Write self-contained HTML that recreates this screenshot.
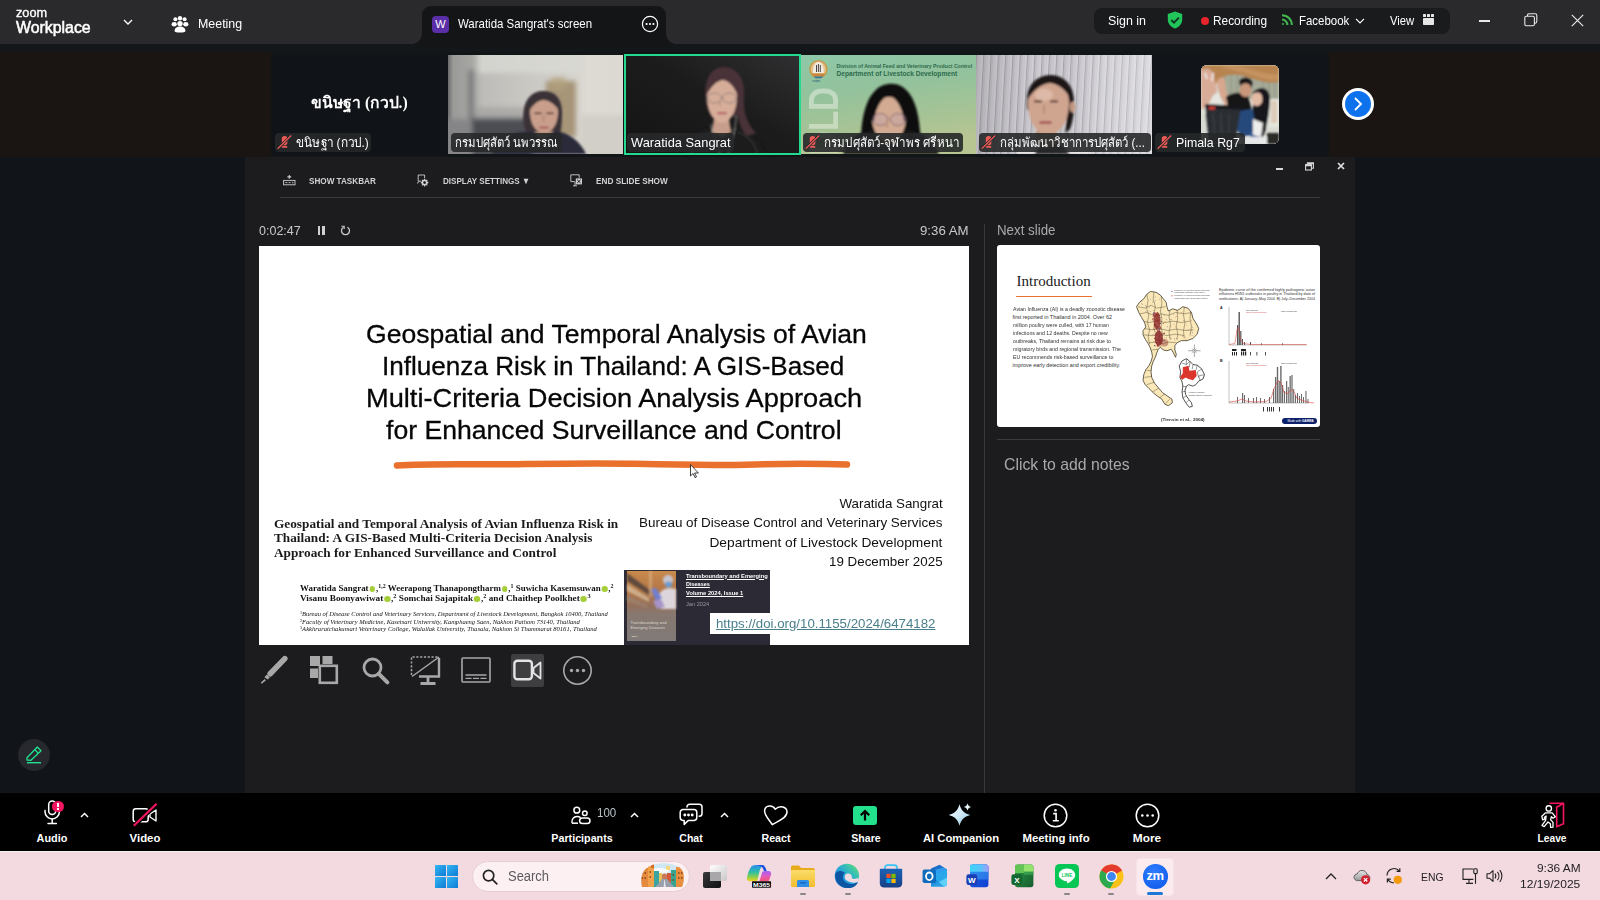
<!DOCTYPE html>
<html lang="en">
<head>
<meta charset="utf-8">
<title>Zoom Workplace</title>
<style>
*{box-sizing:border-box;margin:0;padding:0}
html,body{width:1600px;height:900px;overflow:hidden;background:#1a1512}
body{position:relative;font-family:"Liberation Sans","DejaVu Sans",sans-serif;color:#fff}
.abs{position:absolute}
.t{position:absolute;white-space:nowrap;line-height:1;transform-origin:0 0}
svg{position:absolute;overflow:visible}
/* ---------- title bar ---------- */
#titlebar{left:0;top:0;width:1600px;height:44px;background:#2a2a2c}
#strip0{left:0;top:44px;width:1600px;height:8px;background:#14171a}
#tab{left:422px;top:6px;width:244px;height:40px;background:#131517;border-radius:9px 9px 0 0}
#pill{left:1094px;top:8px;width:356px;height:26px;background:#1a1b1d;border-radius:8px}
.tb{font-size:13px;color:#fff;top:14px}
/* ---------- video strip ---------- */
#vstrip{left:271px;top:52px;width:1058px;height:105px;background:#121518}
.tile{position:absolute;top:55px;width:175px;height:99px;overflow:hidden}
.tile svg{left:0;top:0}
.nm{position:absolute;top:133px;height:19px;background:rgba(38,40,41,.9);border-radius:4px;font-size:13px;line-height:19px;white-space:nowrap;color:#fff;overflow:hidden}
.nm svg{left:1.500px;top:0}
/* ---------- main share area ---------- */
#leftgut{left:0;top:157px;width:245px;height:636px;background:#111519}
#rightgut{left:1355px;top:157px;width:245px;height:636px;background:#111519}
#main{left:245px;top:157px;width:1110px;height:636px;background:#1c1b1e}
.ppt{font-size:9px;font-weight:bold;color:#d2d2d2;top:176.5px}
.hr{position:absolute;height:1px;background:#3b3a3d}
#slide{left:259px;top:246px;width:710px;height:399px;background:#fff;overflow:hidden;color:#111}
#slide .t{color:#111}
#next{left:997px;top:245px;width:323px;height:182px;background:#fff;border-radius:3px;overflow:hidden;color:#222}
/* ---------- zoom toolbar ---------- */
#ztool{left:0;top:793px;width:1600px;height:58px;background:#000}
.zl{position:absolute;top:832.700px;font-size:11.5px;font-weight:bold;color:#fff;white-space:nowrap;line-height:1;transform:translateX(-50%)}
/* ---------- windows taskbar ---------- */
#wtask{left:0;top:851px;width:1600px;height:49px;background:#f3d9e0;border-top:1px solid #f6f0f2}
.wt{color:#1d1d1f;font-size:12px}
.au{font-size:8.700px;font-weight:bold;font-family:'Liberation Serif','DejaVu Serif',serif;color:#1b1b1b}
.au i{display:inline-block;width:5.500px;height:5.500px;border-radius:50%;background:#a6ce39;margin:0 .8px 0 1px;vertical-align:-0.300px}
.au sup{font-size:5.800px;vertical-align:3.200px;line-height:0}
.af{font-size:6.300px;font-style:italic;font-family:'Liberation Serif','DejaVu Serif',serif;color:#222}
.af sup{font-size:4px;font-style:normal;vertical-align:2.200px;line-height:0}
.nb{font-size:5.400px;color:#333;left:15.500px}
</style>
</head>
<body>
<!-- ================= TITLE BAR ================= -->
<div id="titlebar" class="abs"></div>
<div id="strip0" class="abs"></div>
<div id="tab" class="abs"></div>
<div id="pill" class="abs"></div>
<div id="tabcl" class="abs" style="left:412px;top:34px;width:10px;height:10px;background:radial-gradient(circle at 0 0,rgba(19,21,23,0) 9.500px,#131517 10px)"></div>
<div id="tabcr" class="abs" style="left:666px;top:34px;width:10px;height:10px;background:radial-gradient(circle at 100% 0,rgba(19,21,23,0) 9.500px,#131517 10px)"></div>

<div class="t" id="zlogo" style="left:16px;top:6px;font-size:13.500px;font-weight:normal;-webkit-text-stroke:.35px #fff;transform-origin:0 0;transform:scaleX(.94)">zoom</div>
<div class="t" id="zwork" style="left:16px;top:19px;font-size:16.5px;font-weight:normal;-webkit-text-stroke:.55px #fff;transform-origin:0 0;transform:scaleX(.962)">Workplace</div>
<svg style="left:123px;top:19px" width="10" height="7" viewBox="0 0 10 7"><path d="M1 1l4 4 4-4" fill="none" stroke="#fff" stroke-width="1.3"/></svg>
<!-- meeting people icon -->
<svg style="left:171px;top:15px" width="18" height="18" viewBox="0 0 18 18" fill="#fff">
<circle cx="4.4" cy="4.2" r="2"/><circle cx="9" cy="3.3" r="2.2"/><circle cx="13.6" cy="4.2" r="2"/>
<ellipse cx="3.2" cy="9.2" rx="2.6" ry="2.2"/><ellipse cx="14.8" cy="9.2" rx="2.6" ry="2.2"/>
<circle cx="9" cy="8.6" r="2.7"/><path d="M3.6 16.2c0-3 2.2-4.6 5.4-4.6s5.400 1.600 5.400 4.600c0 .8-2.400 1.300-5.400 1.300s-5.400-.5-5.400-1.300z"/>
</svg>
<div class="t tb" id="tmeet" style="left:198px;top:17px;transform:scaleX(.955)">Meeting</div>

<!-- tab -->
<div class="abs" style="left:432px;top:16px;width:17px;height:17px;border-radius:4px;background:#5a2ea6"></div>
<div class="t" style="left:432px;top:19px;width:17px;text-align:center;font-size:11px">W</div>
<div class="t tb" id="ttab" style="left:458px;top:17px;transform:scaleX(.88)">Waratida Sangrat's screen</div>
<svg style="left:641px;top:15px" width="18" height="18" viewBox="0 0 18 18"><circle cx="9" cy="9" r="7.6" fill="none" stroke="#fff" stroke-width="1.2"/><circle cx="5.6" cy="9" r="1.1" fill="#fff"/><circle cx="9" cy="9" r="1.1" fill="#fff"/><circle cx="12.4" cy="9" r="1.1" fill="#fff"/></svg>

<!-- right pill -->
<div class="t tb" id="tsign" style="left:1108px;transform:scaleX(.957)">Sign in</div>
<svg style="left:1166px;top:11px" width="18" height="18" viewBox="0 0 18 18"><path d="M9 .6l7.200 2.500v5.300c0 4.200-3 7.600-7.200 9-4.200-1.400-7.200-4.800-7.200-9V3.100z" fill="#22c55a"/><path d="M5.300 9l2.700 2.700 4.900-5" fill="none" stroke="#12331f" stroke-width="1.900"/></svg>
<div class="abs" style="left:1201px;top:17px;width:8px;height:8px;border-radius:50%;background:#e8252b"></div>
<div class="t tb" id="trec" style="left:1213px;transform:scaleX(.912)">Recording</div>
<svg style="left:1281px;top:14px" width="12" height="12" viewBox="0 0 12 12" fill="none" stroke="#3fb950" stroke-width="2"><path d="M1 1.200c5.600 0 9.800 4.200 9.800 9.800"/><path d="M1 5.600c3 0 5.400 2.400 5.400 5.400"/><circle cx="2" cy="10" r="1" fill="#3fb950" stroke="none"/></svg>
<div class="t tb" id="tfb" style="left:1299px;transform:scaleX(.88)">Facebook</div>
<svg style="left:1355px;top:18px" width="10" height="6" viewBox="0 0 10 6"><path d="M1 .8l4 4 4-4" fill="none" stroke="#fff" stroke-width="1.200"/></svg>
<div class="t tb" id="tview" style="left:1390px;transform:scaleX(.868)">View</div>
<svg style="left:1423px;top:14px" width="11" height="11" viewBox="0 0 11 11" fill="#e6e6e6"><rect x="0" y="0" width="3" height="3" rx=".5"/><rect x="4" y="0" width="3" height="3" rx=".5"/><rect x="8" y="0" width="3" height="3" rx=".5"/><rect x="0" y="4" width="11" height="7" rx=".8"/></svg>
<!-- window controls -->
<div class="abs" style="left:1479px;top:20px;width:11px;height:1.5px;background:#e8e8e8"></div>
<svg style="left:1524px;top:13px" width="14" height="14" viewBox="0 0 14 14" fill="none" stroke="#e8e8e8" stroke-width="1.1"><rect x=".8" y="3.200" width="9.600" height="9.600" rx="1.600"/><path d="M3.400 3V2.400c0-.9.700-1.600 1.600-1.600h6.200c.9 0 1.600.7 1.600 1.600v6.200c0 .9-.7 1.600-1.600 1.600h-.6"/></svg>
<svg style="left:1571px;top:14px" width="13" height="13" viewBox="0 0 13 13"><path d="M.8.800l11.400 11.400M12.200.800L.8 12.200" stroke="#e8e8e8" stroke-width="1.200" fill="none"/></svg>
<!-- ================= VIDEO STRIP ================= -->
<div id="vstrip" class="abs"></div>
<svg width="0" height="0" style="left:0;top:0"><defs>
<filter id="b0" x="-10%" y="-10%" width="120%" height="120%"><feGaussianBlur stdDeviation=".35"/></filter>
<filter id="b1" x="-20%" y="-20%" width="140%" height="140%"><feGaussianBlur stdDeviation="1.1"/></filter>
<filter id="b2" x="-20%" y="-20%" width="140%" height="140%"><feGaussianBlur stdDeviation="2.400"/></filter>
<filter id="b5" x="-30%" y="-30%" width="160%" height="160%"><feGaussianBlur stdDeviation="5"/></filter>
<g id="mute"><rect x="4.800" y="3" width="5.600" height="9.200" rx="2.800" fill="#ee5b57"/><path d="M4.900 13.300c1.600-.7 3.800-.7 5.400 0v1.500H4.900z" fill="#ee5b57"/><path d="M.7 15.800L14.200 2.500" stroke="#26282a" stroke-width="2.600" fill="none"/><path d="M.7 15.800L14.200 2.500" stroke="#ee5b57" stroke-width="1.200" fill="none"/></g>
</defs></svg>

<!-- tile 1 : name only -->
<div class="tile" style="left:272px;background:#101317"></div>
<div class="t" id="v1big" style="left:311px;top:95px;font-size:16px;font-weight:bold;font-family:'Liberation Serif','DejaVu Serif',serif;transform:scaleX(.98)">ขนิษฐา (กวป.)</div>
<div class="nm" style="left:275px;width:96px"><svg width="15" height="15" viewBox="0 0 15 15"><use href="#mute"/></svg><span class="t" id="v1nm" style="left:21px;top:3px;transform:scaleX(.91)">ขนิษฐา (กวป.)</span></div>

<!-- tile 2 : woman, pale room -->
<div class="tile" style="left:448px;background:#cfcdc8">
<svg width="175" height="99" viewBox="0 0 175 99">
<defs><linearGradient id="g2" x1="0" x2="1" y1="0" y2="0"><stop offset="0" stop-color="#6c6d6e"/><stop offset=".03" stop-color="#9a9a98"/><stop offset=".13" stop-color="#a6a6a3"/><stop offset=".2" stop-color="#bdbcb8"/><stop offset=".45" stop-color="#c9c8c3"/><stop offset=".7" stop-color="#d3d1cb"/><stop offset=".8" stop-color="#dddbd4"/><stop offset="1" stop-color="#dbd9d2"/></linearGradient></defs>
<rect width="175" height="99" fill="url(#g2)"/>
<g filter="url(#b2)">
<rect x="30" y="-4" width="100" height="22" fill="#dad9d4" opacity=".8"/>
<rect x="20" y="15" width="6" height="60" fill="#77777a" opacity=".85"/>
<rect x="98" y="26" width="30" height="56" fill="#9c8764" opacity=".8"/>
<rect x="103" y="22" width="14" height="12" fill="#b7a47e" opacity=".7"/>
<rect x="-6" y="64" width="32" height="42" fill="#858587"/>
<rect x="24" y="62" width="60" height="44" fill="#4c4d52"/>
<rect x="26" y="52" width="50" height="12" fill="#a2a19f" opacity=".7"/>
<rect x="132" y="60" width="50" height="44" fill="#d2cfc8"/>
</g>
<g filter="url(#b1)">
<path d="M76 70c-3-18 3-33 18-34 13-1 21 8 20 24 0 9-1 17-3 24l-28 1c-3-4-6-9-7-15z" fill="#3b3338"/>
<path d="M44 99c2-11 13-19 30-22l34-1c13 2 24 10 30 23z" fill="#2a2c3a"/>
<path d="M86 77l9 9 11-10z" fill="#b48a77"/>
<path d="M82 57c0-10 6-16 14-16s14 6 14 16c0 12-6 21-14 21s-14-9-14-21z" fill="#c99f8c"/>
<path d="M81 56c1-11 7-17 15-17s13 5 14 15c-5-6-10-9-15-9-6 1-10 5-14 11z" fill="#3b3338"/>
<rect x="91" y="71.500" width="10" height="2.200" rx="1.100" fill="#a9605d"/>
<rect x="86.500" y="57.500" width="7" height="1.600" fill="#50342f"/><rect x="98.500" y="57.500" width="7" height="1.600" fill="#50342f"/>
<path d="M95.500 60v7" stroke="#ad816e" stroke-width="1.400"/>
</g>
</svg></div>
<div class="nm" style="left:451px;width:111px"><span class="t" id="v2nm" style="left:4px;top:3px;transform:scaleX(.875)">กรมปศุสัตว์ นพวรรณ</span></div>

<!-- tile 3 : active speaker -->
<div class="tile" style="left:624px;width:177px;top:54px;height:101px;background:#131313">
<svg width="177" height="101" viewBox="0 0 177 101">
<defs><linearGradient id="g3" x1="0" y1="1" x2="1" y2="0"><stop offset="0" stop-color="#141414"/><stop offset=".55" stop-color="#1c1c1c"/><stop offset="1" stop-color="#303032"/></linearGradient></defs>
<rect width="177" height="101" fill="url(#g3)"/>
<g filter="url(#b1)">
<path d="M60 101c2-16 10-24 26-27l28 1c14 3 22 10 27 26z" fill="#1a1a1b"/>
<path d="M66 101c2-12 8-19 22-23M134 101c-3-12-9-19-20-23" stroke="#303032" stroke-width="1.600" fill="none"/>
<path d="M82 50c-3-22 3-36 17-37 15 0 22 12 21 30 0 8 0 13 2 19 2 7 6 13 10 17l-9 3c-5-5-8-12-9-20l-26 2c-3-4-5-8-6-14z" fill="#4a3137"/>
<path d="M90 64h15l2 14-9 5-10-5z" fill="#c79e8b"/>
<path d="M83 42c0-12 6-19 15-19s15 7 15 19c0 15-7 27-15 27s-15-12-15-27z" fill="#d6ad99"/>
<path d="M82 42c1-16 8-22 16-22 9 0 15 6 15 20-4-9-9-14-15-14-7 2-11 7-16 16z" fill="#4a3137"/>
<ellipse cx="90.500" cy="44" rx="7" ry="5" fill="none" stroke="#8a7c7c" stroke-width=".9"/><ellipse cx="105.500" cy="44" rx="7" ry="5" fill="none" stroke="#8a7c7c" stroke-width=".9"/><path d="M97.500 43.500h1" stroke="#8a7c7c" stroke-width=".8"/>
<rect x="93" y="58" width="10" height="2.200" rx="1.100" fill="#b5606a"/>
<path d="M96 46v6" stroke="#b98f7c" stroke-width="1.400"/>
<path d="M87 70c2 10 6 18 9 28M112 62c0 12-4 24-8 36" stroke="#bdbdbd" stroke-width=".7" fill="none"/>
</g>
</svg>
<div class="abs" style="left:0;top:0;width:177px;height:101px;border:2px solid #24d990"></div>
</div>
<div class="nm" style="left:627px;width:107px;font-size:13.500px"><span class="t" id="v3nm" style="left:4px;top:3px;transform:scaleX(.952)">Waratida Sangrat</span></div>

<!-- tile 4 : green DLD backdrop -->
<div class="tile" style="left:801px;width:175px;background:#95c39b">
<svg width="175" height="99" viewBox="0 0 175 99">
<defs><linearGradient id="g4" x1="0" x2=".25" y1="0" y2="1"><stop offset="0" stop-color="#8ec8a8"/><stop offset=".4" stop-color="#93c29c"/><stop offset=".75" stop-color="#a6c395"/><stop offset="1" stop-color="#b7c592"/></linearGradient></defs>
<rect width="175" height="99" fill="url(#g4)"/>
<text transform="translate(36.600 100) rotate(-90) scale(.77 1)" font-family="Liberation Sans,sans-serif" font-weight="bold" font-size="43" fill="#e6eee0" opacity=".55">DLD</text>
<circle cx="17.400" cy="14.200" r="9.200" fill="#c99a4c"/><circle cx="17.400" cy="14.200" r="7.600" fill="#e2c48e"/><path d="M12 18c0-7 2-11 5.400-11s5.400 4 5.400 11z" fill="#f3ece0"/><path d="M15.500 17V10M17.400 17V9M19.300 17V10" stroke="#333" stroke-width=".9"/><path d="M11 18.500h13l-1.600 3h-9.800z" fill="#c8873a"/><path d="M12.600 21.500h9.600l-2 1.800h-5.600z" fill="#2c78a8"/>
<text x="11" y="27.400" font-family="Liberation Sans,sans-serif" font-size="2.200" fill="#2f6e78">กรมปศุสัตว์</text>
<text x="35.600" y="13" font-family="Liberation Sans,sans-serif" font-weight="bold" font-size="5.300" fill="#2d6b4c" textLength="135.600" lengthAdjust="spacingAndGlyphs">Division of Animal Feed and Veterinary Product Control</text>
<text x="35.600" y="20.600" font-family="Liberation Sans,sans-serif" font-weight="bold" font-size="6.700" fill="#2d6b4c" textLength="120.600" lengthAdjust="spacingAndGlyphs">Department of Livestock Development</text>
<g filter="url(#b1)">
<path d="M60 92c-1-30 6-60 27-63 9-1 15 2 21 9 9 12 11 30 12 54l-4 7H64z" fill="#0e0e10"/>
<path d="M42 99c3-12 14-21 28-24h38c14 2 24 11 30 24z" fill="#141416"/>
<path d="M71 62c0-12 7-20 17-20s17 8 17 20c0 14-8 26-17 26s-17-12-17-26z" fill="#d3aa92"/>
<path d="M69 66c-1-18 5-30 17-34l2 8c-8 4-13 12-15 26zM107 66c1-18-5-30-17-34l-2 8c8 4 13 12 15 26z" fill="#0e0e10"/>
<ellipse cx="79.500" cy="64.500" rx="7.500" ry="6" fill="#b9a0c0" fill-opacity=".25" stroke="#7d6470" stroke-width=".9"/><ellipse cx="97" cy="64.500" rx="7.500" ry="6" fill="#b9a0c0" fill-opacity=".25" stroke="#7d6470" stroke-width=".9"/>
<path d="M86 64v9" stroke="#b98f78" stroke-width="1.600"/>
<path d="M76 84l12 10 12-10v12H76z" fill="#141416"/>
</g>
</svg></div>
<div class="nm" style="left:803px;width:160px"><svg width="15" height="15" viewBox="0 0 15 15"><use href="#mute"/></svg><span class="t" id="v4nm" style="left:21px;top:3px;transform:scaleX(.894)">กรมปศุสัตว์-จุฬาพร ศรีหนา</span></div>

<!-- tile 5 : woman, blinds -->
<div class="tile" style="left:976px;width:176px;background:#cfccd2">
<svg width="176" height="99" viewBox="0 0 176 99">
<defs><pattern id="bl" width="7.300" height="99" patternUnits="userSpaceOnUse" patternTransform="skewX(-3)"><rect width="7.300" height="99" fill="#cfcdd3"/><rect x="0" width="1.100" height="99" fill="#a9a7ae"/><rect x="1.100" width="1.600" height="99" fill="#c3c1c8"/><rect x="5.500" width="1.800" height="99" fill="#d6d4da"/></pattern>
<linearGradient id="g5" x1="0" x2="1" y1="0" y2="0"><stop offset="0" stop-color="#000" stop-opacity=".12"/><stop offset=".35" stop-color="#000" stop-opacity=".02"/><stop offset=".7" stop-color="#fff" stop-opacity=".12"/><stop offset="1" stop-color="#fff" stop-opacity=".3"/></linearGradient></defs>
<rect x="-6" width="190" height="99" fill="url(#bl)"/><rect width="176" height="99" fill="url(#g5)"/>
<g filter="url(#b1)">
<path d="M40 99c3-9 12-14 24-16h24c12 1 22 6 28 16z" fill="#ebe7e6"/>
<path d="M58 99l10-14h14l12 14z" fill="#2a2729"/>
<path d="M51 52c-1-20 9-32 24-32 15 1 24 12 23 30 0 8-1 16-4 24l-5 4c2-10 2-20 0-28l-36 6c-1-1-2-2-2-4z" fill="#1b1719"/>
<ellipse cx="96.500" cy="52" rx="3" ry="5.500" fill="#c39882"/>
<path d="M60 76h20l3 12-13 5-12-5z" fill="#c3947e"/>
<path d="M52 48c0-15 8-24 20-24s21 9 21 24c0 18-9 32-21 32S52 66 52 48z" fill="#d0a590"/>
<ellipse cx="68" cy="40" rx="9" ry="6" fill="#e3c3b2" opacity=".7"/>
<path d="M51 46c0-16 9-25 22-25 12 0 21 8 21 22-5-9-12-14-20-15-9 1-17 7-23 18z" fill="#1b1719"/>
<rect x="58" y="45.500" width="8" height="1.800" fill="#3d2824"/><rect x="74" y="45.500" width="8" height="1.800" fill="#3d2824"/>
<path d="M68 50v9" stroke="#b58a76" stroke-width="1.800"/>
<rect x="63" y="66" width="13" height="3" rx="1.500" fill="#a85f5c"/>
</g>
</svg></div>
<div class="nm" style="left:979px;width:172px"><svg width="15" height="15" viewBox="0 0 15 15"><use href="#mute"/></svg><span class="t" id="v5nm" style="left:21px;top:3px;transform:scaleX(.879)">กลุ่มพัฒนาวิชาการปศุสัตว์ (...</span></div>

<!-- tile 6 : avatar -->
<div class="tile" style="left:1152px;width:176px;background:#111418">
<div class="abs" style="left:49px;top:10px;width:78px;height:79px;border-radius:6px;overflow:hidden;background:#d9d8d0">
<svg width="78" height="79" viewBox="0 0 78 79">
<rect width="78" height="79" fill="#d9dbd2"/>
<g filter="url(#b1)">
<path d="M18 8h60v26H18z" fill="#a6ab99"/>
<path d="M24 10v22M30 10v22M36 10v22M62 14v18M68 14v18M74 14v18" stroke="#8c917f" stroke-width="1"/>
<rect x="60" y="34" width="18" height="28" fill="#e4e6dc"/><rect x="70" y="36" width="6" height="22" fill="#d8b8a0" opacity=".6"/>
<rect x="0" y="28" width="22" height="20" fill="#e3e5de"/>
<path d="M0 0h78v17c-8 2-16 0-26-3-10-4-22-6-30-2-6 3-8 8-10 16-2 8-6 14-12 16z" fill="#b78450"/>
<path d="M20 2c10-3 24 0 36 4 8 3 16 4 22 3v6c-8 1-16-1-24-4-12-4-24-6-34-9z" fill="#c99a68" opacity=".7"/>
<path d="M0 6c4-4 9-3 12 2l3 12c2 6 0 10-3 10l-4 8-8 8z" fill="#d9ac98"/>
<path d="M4 8l2 6M12 8l-1 8" stroke="#f1e4e0" stroke-width="2"/>
<path d="M16 16c2-4 6-4 8-2l1 10c1 6 3 10 6 12l-4 6c-6-4-10-14-11-26z" fill="#d7a78e"/>
<path d="M25 32c4-4 14-6 22-2l4 16-22 6z" fill="#131316"/>
<path d="M38 16c2-5 12-5 14 2l-2 6H40z" fill="#17151a"/>
<ellipse cx="44.500" cy="25" rx="6" ry="7" fill="#c9987c"/>
<path d="M38 19c3-5 10-5 13-1-4 0-8 0-13 1z" fill="#17151a"/>
<path d="M54 26c6-6 16-3 15 10-1 14-3 28-8 38l-9-4c3-8 2-18 0-26z" fill="#17141b"/>
<ellipse cx="56" cy="34" rx="5.500" ry="7" fill="#e4bba5"/>
<path d="M51 29c2-5 8-6 12-2-4 0-8 0-12 2z" fill="#17141b"/>
<path d="M52 41c4 2 10 4 14 12l-4 12-12-6z" fill="#17151a"/>
<path d="M37 46l14-2c3 6 3 16 0 26l-10 2-6-8z" fill="#27487b"/>
<path d="M50 66l10 2-2 9H48z" fill="#2f5a94"/>
<path d="M52 54l10 4-2 14-8-2z" fill="#eeeeec"/>
<path d="M4 40l36 2-6 37H8z" fill="#2b2f33"/><path d="M4 39l37 2v3.500L5 43z" fill="#15171a"/><rect x="8" y="41.500" width="6" height="3" fill="#d63a34"/>
<path d="M12 48l2 28M20 48l1 30M28 49v28" stroke="#3d4247" stroke-width="1.200"/>
<rect x="44" y="72" width="24" height="7" fill="#e6e8ea"/><rect x="66" y="68" width="12" height="11" fill="#2c2a28"/>
</g>
</svg></div>
</div>
<div class="nm" style="left:1155px;width:90px;font-size:13.500px"><svg width="15" height="15" viewBox="0 0 15 15"><use href="#mute"/></svg><span class="t" id="v6nm" style="left:21px;top:3px;transform:scaleX(.914)">Pimala Rg7</span></div>

<!-- next page button -->
<div class="abs" style="left:1342px;top:88px;width:32px;height:32px;border-radius:50%;background:#fff"></div>
<div class="abs" style="left:1345px;top:91px;width:26px;height:26px;border-radius:50%;background:#0e72ed"></div>
<svg style="left:1352px;top:96px" width="12" height="16" viewBox="0 0 12 16"><path d="M3 2l6 6-6 6" fill="none" stroke="#fff" stroke-width="1.800"/></svg>
<!-- ================= MAIN ================= -->
<div id="leftgut" class="abs"></div>
<div id="rightgut" class="abs"></div>
<div id="main" class="abs"></div>

<!-- presenter-view window controls -->
<div class="abs" style="left:1276px;top:168px;width:7px;height:2px;background:#d8d8d8"></div>
<svg style="left:1305px;top:162px" width="9" height="9" viewBox="0 0 9 9" fill="none" stroke="#d8d8d8" stroke-width="1.100"><rect x=".6" y="2.600" width="5.800" height="5.400"/><path d="M2.400 2.400V.8h6v5.400H6.600"/><path d="M.6 3.600h5.800M2.400 1.600h6" stroke-width="1.400"/></svg>
<svg style="left:1337px;top:162px" width="8" height="8" viewBox="0 0 8 8"><path d="M1 1l6 6M7 1L1 7" stroke="#e0e0e0" stroke-width="1.700"/></svg>

<!-- top commands -->
<svg style="left:283px;top:175px" width="13" height="11" viewBox="0 0 13 11" fill="none" stroke="#cfcfcf" stroke-width=".9"><rect x=".6" y="5.400" width="11.400" height="4.400"/><path d="M2.400 7.600h2M5.600 7.600h2M9.800 6.800v1.600" /><path d="M6.300 0v3.800M4.400 1.900h3.800" stroke-width="1.100"/></svg>
<div class="t ppt" id="p1" style="left:309px;transform:scaleX(.905)">SHOW TASKBAR</div>
<svg style="left:416px;top:174px" width="13" height="13" viewBox="0 0 13 13" fill="none" stroke="#cfcfcf" stroke-width=".9"><path d="M5 7.200H2.200V1h6.400v3"/><path d="M1 9.400l2.400-2"/><circle cx="8.600" cy="8.600" r="2.200" stroke-width="1.600"/><path d="M8.600 4.800v1.400M8.600 11v1.400M4.800 8.600h1.400M11 8.600h1.400M5.900 5.900l1 1M10.300 10.300l1 1M5.900 11.300l1-1M10.300 6.900l1-1" stroke-width="1.100"/></svg>
<div class="t ppt" id="p2" style="left:442.500px;transform:scaleX(.897)">DISPLAY SETTINGS ▼</div>
<svg style="left:570px;top:174px" width="13" height="13" viewBox="0 0 13 13" fill="none" stroke="#cfcfcf" stroke-width=".9"><path d="M4.800 7.600H.8V.8h8.400v3"/><path d="M3 11.800h4M5 7.800v4"/><rect x="5.800" y="4.400" width="6.200" height="6" fill="#cfcfcf" stroke="none"/><path d="M7.200 5.800l3.400 3.200M10.600 5.800L7.200 9" stroke="#1c1b1e" stroke-width="1"/></svg>
<div class="t ppt" id="p3" style="left:596px;transform:scaleX(.914)">END SLIDE SHOW</div>
<div class="hr" style="left:280px;top:197px;width:1040px"></div>

<!-- timer row -->
<div class="t" id="ptimer" style="left:259px;top:224px;font-size:13px;color:#c9c9c9;transform:scaleX(.963)">0:02:47</div>
<div class="abs" style="left:317.500px;top:226px;width:2.500px;height:9px;background:#d0d0d0"></div>
<div class="abs" style="left:322px;top:226px;width:2.500px;height:9px;background:#d0d0d0"></div>
<svg style="left:340px;top:225px" width="11" height="11" viewBox="0 0 11 11" fill="none" stroke="#c9c9c9" stroke-width="1.300"><path d="M3.600 2.200A4 4 0 1 0 7.400 2.200"/><path d="M1.400 1.200h2.800v2.800" stroke-width="1.100"/></svg>
<div class="t" id="pclock" style="left:920px;top:224px;font-size:13px;color:#c9c9c9;transform:scaleX(1.02)">9:36 AM</div>

<!-- divider + right column -->
<div class="abs" style="left:984px;top:224px;width:1px;height:569px;background:#38373a"></div>
<div class="t" id="pnext" style="left:997px;top:222.500px;font-size:14px;color:#a9a9a9;transform:scaleX(.951)">Next slide</div>
<div class="hr" style="left:997px;top:439px;width:323px"></div>
<div class="t" id="pnotes" style="left:1003.500px;top:456px;font-size:17px;color:#a9a9a9;transform:scaleX(.93)">Click to add notes</div>
<!-- ================= CURRENT SLIDE ================= -->
<div id="slide" class="abs">
<!-- coordinates inside are relative to (259,246) -->
<div class="t" id="s1" style="color:#060606;-webkit-text-stroke:.3px #060606;left:107px;top:75px;font-size:26.500px;transform:scaleX(1.002)">Geospatial and Temporal Analysis of Avian</div>
<div class="t" id="s2" style="color:#060606;-webkit-text-stroke:.3px #060606;left:123px;top:107px;font-size:26.500px;transform:scaleX(.985)">Influenza Risk in Thailand: A GIS-Based</div>
<div class="t" id="s3" style="color:#060606;-webkit-text-stroke:.3px #060606;left:107px;top:139px;font-size:26.500px;transform:scaleX(1.027)">Multi-Criteria Decision Analysis Approach</div>
<div class="t" id="s4" style="color:#060606;-webkit-text-stroke:.3px #060606;left:127px;top:171px;font-size:26.500px;transform:scaleX(1.004)">for Enhanced Surveillance and Control</div>
<svg style="left:136px;top:214px" width="454" height="11" viewBox="0 0 454 11"><path d="M2 5.500C40 3.200 80 4.800 120 4.200s80-1.400 120-.4 80 1.800 120 .6 60-1.200 92 .2" fill="none" stroke="#e9712d" stroke-width="6.500" stroke-linecap="round"/></svg>

<svg id="cursor" style="left:431px;top:218px" width="10" height="15" viewBox="0 0 10 15"><path d="M.5.600v11.400l2.600-2.500 1.900 4.100 1.500-.7-1.900-3.900h3.800z" fill="#fff" stroke="#111" stroke-width=".8" stroke-linejoin="round"/></svg>
<!-- presenter block, right aligned at x=683.5 -->
<div class="t" id="a1" style="right:26.400px;transform-origin:100% 0;top:250.500px;font-size:13px;transform:scaleX(1.025)">Waratida Sangrat</div>
<div class="t" id="a2" style="right:26.400px;transform-origin:100% 0;top:270px;font-size:13px;transform:scaleX(1.034)">Bureau of Disease Control and Veterinary Services</div>
<div class="t" id="a3" style="right:26.400px;transform-origin:100% 0;top:289.500px;font-size:13px;transform:scaleX(1.057)">Department of Livestock Development</div>
<div class="t" id="a4" style="right:26.400px;transform-origin:100% 0;top:309px;font-size:13px;transform:scaleX(1.027)">19 December 2025</div>

<!-- paper heading (serif) -->
<div class="t" id="h1" style="left:15px;top:270.500px;font-size:13px;font-weight:bold;font-family:'Liberation Serif','DejaVu Serif',serif;color:#1b1b1b;transform:scaleX(1.021)">Geospatial and Temporal Analysis of Avian Influenza Risk in</div>
<div class="t" id="h2" style="left:15px;top:285.200px;font-size:13px;font-weight:bold;font-family:'Liberation Serif','DejaVu Serif',serif;color:#1b1b1b;transform:scaleX(1.019)">Thailand: A GIS-Based Multi-Criteria Decision Analysis</div>
<div class="t" id="h3" style="left:15px;top:300px;font-size:13px;font-weight:bold;font-family:'Liberation Serif','DejaVu Serif',serif;color:#1b1b1b;transform:scaleX(1.022)">Approach for Enhanced Surveillance and Control</div>
<div class="t au" id="u1" style="left:41px;top:338.300px;transform:scaleX(1.026)">Waratida Sangrat<i></i>,<sup>1,2</sup> Weerapong Thanapongtharm<i></i>,<sup>1</sup> Suwicha Kasemsuwan<i></i>,<sup>2</sup></div>
<div class="t au" id="u2" style="left:41px;top:348.300px;transform:scaleX(1.066)">Visanu Boonyawiwat<i></i>,<sup>2</sup> Somchai Sajapitak<i></i>,<sup>2</sup> and Chaithep Poolkhet<i></i><sup>3</sup></div>
<div class="t af" id="f1" style="left:41px;top:365px;transform:scaleX(1.03)"><sup>1</sup>Bureau of Disease Control and Veterinary Services, Department of Livestock Development, Bangkok 10400, Thailand</div>
<div class="t af" id="f2" style="left:41px;top:372.700px;transform:scaleX(1.037)"><sup>2</sup>Faculty of Veterinary Medicine, Kasetsart University, Kamphaeng Saen, Nakhon Pathom 73140, Thailand</div>
<div class="t af" id="f3" style="left:41px;top:380.400px;transform:scaleX(1.049)"><sup>3</sup>Akkhraratchakumari Veterinary College, Walailak University, Thasala, Nakhon Si Thammarat 80161, Thailand</div>

<!-- journal card -->
<div class="abs" style="left:365px;top:323.500px;width:146px;height:76px;background:#2b2a35"></div>
<svg style="left:368px;top:325px" width="49" height="70" viewBox="0 0 49 70">
<defs><linearGradient id="cv" x1="0" x2="0" y1="0" y2="1"><stop offset="0" stop-color="#c98a4c"/><stop offset=".3" stop-color="#b07448"/><stop offset=".5" stop-color="#93705c"/><stop offset=".62" stop-color="#877870"/><stop offset="1" stop-color="#7f7a78"/></linearGradient></defs>
<rect width="49" height="70" fill="url(#cv)"/>
<g filter="url(#b1)"><path d="M0 2l24 18v5L0 10z" fill="#5f4a3c"/><path d="M0 13l22 14v4L0 20z" fill="#d8c0a0" opacity=".75"/><path d="M0 24l20 10v3L0 30z" fill="#9a8474" opacity=".7"/><rect x="22" y="0" width="3" height="26" fill="#d9b489" opacity=".6"/>
<circle cx="41" cy="9" r="5" fill="#c9c6cf"/><ellipse cx="41.500" cy="13.500" rx="3.600" ry="3" fill="#6b9bd0"/><path d="M32 24c2-6 8-8 17-6v20H34z" fill="#dcd6dc"/><path d="M24 18l5-1 6 10-6 3z" fill="#6f7fd0"/><path d="M26 30l8-2 4 8-8 2z" fill="#a894c8"/></g>
<text x="3.500" y="52.500" font-family="Liberation Sans,sans-serif" font-size="4.300" fill="#ddd6d0" textLength="36" lengthAdjust="spacingAndGlyphs">Transboundary and</text>
<text x="3.500" y="57.600" font-family="Liberation Sans,sans-serif" font-size="4.300" fill="#ddd6d0" textLength="34.500" lengthAdjust="spacingAndGlyphs">Emerging Diseases</text>
<text x="4.500" y="66" font-family="Liberation Sans,sans-serif" font-weight="bold" font-size="1.900" fill="#e6e0dc">WILEY</text>
</svg>
<div class="t jc" id="j1" style="left:426.500px;top:326.600px;font-size:6.200px;font-weight:bold;color:#fff;text-decoration:underline;transform:scaleX(.932)">Transboundary and Emerging</div>
<div class="t jc" id="j2" style="left:426.500px;top:335.400px;font-size:6.200px;font-weight:bold;color:#fff;text-decoration:underline;transform:scaleX(.889)">Diseases</div>
<div class="t jc" id="j3" style="left:426.500px;top:344.300px;font-size:6.200px;font-weight:bold;color:#fff;text-decoration:underline;transform:scaleX(.927)">Volume 2024, Issue 1</div>
<div class="t jc" id="j4" style="left:426.500px;top:355.300px;font-size:6px;color:#9a99a2;transform:scaleX(.94)">Jan 2024</div>
<div class="abs" style="left:451px;top:366.500px;width:240px;height:21.500px;background:#fff"></div>
<div class="t" id="doi" style="left:456.500px;top:370.800px;text-decoration-thickness:.9px;font-size:13px;color:#497f8b;text-decoration:underline;transform:scaleX(1.02)">https://doi.org/10.1155/2024/6474182</div>
</div>
<!-- ================= NEXT SLIDE THUMBNAIL ================= -->
<div id="next" class="abs">
<!-- coordinates relative to (997,245) -->
<div class="t" id="n1" style="left:19.500px;top:28.500px;font-size:15px;font-family:'Liberation Serif','DejaVu Serif',serif;color:#1a1a1a">Introduction</div>
<div class="abs" style="left:19px;top:50.500px;width:76px;height:1.500px;background:#e9712d;border-radius:1px"></div>
<div class="t nb" id="nb1" style="top:62px;transform:scaleX(.966)">Avian Influenza (AI) is a deadly zoonotic disease</div>
<div class="t nb" id="nb2" style="top:70px">first reported in Thailand in 2004. Over 62</div>
<div class="t nb" id="nb3" style="top:78px;transform:scaleX(.96)">million poultry were culled, with 17 human</div>
<div class="t nb" id="nb4" style="top:86.200px;transform:scaleX(.96)">infections and 12 deaths. Despite no new</div>
<div class="t nb" id="nb5" style="top:94.200px;transform:scaleX(.976)">outbreaks, Thailand remains at risk due to</div>
<div class="t nb" id="nb6" style="top:102.200px;transform:scaleX(.975)">migratory birds and regional transmission. The</div>
<div class="t nb" id="nb7" style="top:110.300px;transform:scaleX(.98)">EU recommends risk-based surveillance to</div>
<div class="t nb" id="nb8" style="top:118.300px">improve early detection and export credibility.</div>

<!-- Thailand map (traced in 6.92x coordinates) -->
<svg style="left:0;top:0" width="323" height="182" viewBox="0 0 323 182">
<defs><clipPath id="thc"><path id="thp" d="M175 45L215 50 245 70 265 95 285 120 290 150 300 180 330 165 365 175 400 150 435 160 460 190 470 230 495 270 510 300 500 340 470 370 430 385 390 385 360 400 345 420 345 450 355 480 350 500 335 470 320 445 290 455 265 450 245 430 230 445 220 470 210 500 195 530 185 560 180 600 185 640 205 680 230 710 260 745 295 770 325 790 328 815 300 835 275 825 255 790 225 770 195 745 165 715 140 690 125 660 130 620 145 585 165 560 180 530 190 495 185 465 175 435 160 405 140 375 125 345 125 315 145 290 135 260 115 225 95 190 80 150 100 120 130 95 150 65z"/></clipPath></defs>
<g transform="translate(128 40) scale(.1445)">
<use href="#thp" fill="#fae8b8" stroke="#2e2716" stroke-width="5"/>
<g clip-path="url(#thc)" stroke="#2e2716" stroke-width="3" fill="none" opacity=".85">
<path d="M90 150l50 10 40-20 40 20 60-10M100 200l50-10 50 20 50-10 50 10 50-20 60 10 50-10M120 250l50 10 50-15 60 15 50-10 60 10 60-10M125 300l60 10 50-10 60 15 60-10 60 10 60-5M130 345l60 5 50-10 50 10 60-10 60 10M165 400l50-5 40 10 50-10 50 5M185 450l40-5 30 5M150 60l10 50-10 50 15 50-10 50 15 50-10 50 10 50M200 50l-5 50 15 50-10 50 10 50-10 50 15 50-5 50M250 80l5 50-10 50 10 50-5 60 10 50-10 50M310 170l-5 50 10 50-10 60 10 50M360 170l5 60-10 50 10 60-5 40M410 150l-5 60 10 50-10 60 5 50M455 180l-5 50 10 60-10 60M150 590l50 5M135 640l60-10M150 690l60-20M190 740l50-30M240 780l40-30M280 820l30-30"/>
</g>
<g clip-path="url(#thc)"><circle cx="237" cy="266" r="4.5" fill="#a93a35"/><circle cx="236" cy="212" r="4.5" fill="#a93a35"/><circle cx="235" cy="240" r="4.5" fill="#a93a35"/><circle cx="234" cy="290" r="3.3" fill="#4b4a92"/><circle cx="224" cy="413" r="4.5" fill="#a93a35"/><circle cx="209" cy="283" r="3.3" fill="#4b4a92"/><circle cx="240" cy="321" r="4.5" fill="#a93a35"/><circle cx="235" cy="262" r="3.3" fill="#4b4a92"/><circle cx="208" cy="214" r="4.5" fill="#a93a35"/><circle cx="212" cy="205" r="3.3" fill="#a93a35"/><circle cx="200" cy="307" r="3.9" fill="#a93a35"/><circle cx="219" cy="275" r="3.3" fill="#a93a35"/><circle cx="233" cy="354" r="3.9" fill="#a93a35"/><circle cx="254" cy="361" r="3.3" fill="#a93a35"/><circle cx="195" cy="218" r="3.9" fill="#a93a35"/><circle cx="239" cy="289" r="3.3" fill="#4b4a92"/><circle cx="205" cy="370" r="4.5" fill="#a93a35"/><circle cx="209" cy="272" r="3.9" fill="#a93a35"/><circle cx="227" cy="206" r="3.3" fill="#a93a35"/><circle cx="224" cy="204" r="4.5" fill="#a93a35"/><circle cx="222" cy="326" r="4.5" fill="#a93a35"/><circle cx="208" cy="272" r="3.9" fill="#4b4a92"/><circle cx="223" cy="229" r="3.3" fill="#a93a35"/><circle cx="237" cy="364" r="3.9" fill="#a93a35"/><circle cx="198" cy="209" r="3.9" fill="#4b4a92"/><circle cx="243" cy="393" r="3.9" fill="#a93a35"/><circle cx="233" cy="422" r="3.3" fill="#a93a35"/><circle cx="205" cy="231" r="3.3" fill="#a93a35"/><circle cx="220" cy="193" r="3.3" fill="#a93a35"/><circle cx="217" cy="288" r="4.5" fill="#a93a35"/><circle cx="245" cy="265" r="4.5" fill="#4b4a92"/><circle cx="254" cy="349" r="4.5" fill="#a93a35"/><circle cx="222" cy="378" r="4.5" fill="#a93a35"/><circle cx="235" cy="284" r="3.3" fill="#a93a35"/><circle cx="243" cy="294" r="4.5" fill="#a93a35"/><circle cx="233" cy="226" r="3.9" fill="#a93a35"/><circle cx="240" cy="334" r="4.5" fill="#a93a35"/><circle cx="226" cy="249" r="3.9" fill="#a93a35"/><circle cx="241" cy="301" r="3.9" fill="#4b4a92"/><circle cx="239" cy="304" r="3.3" fill="#a93a35"/><circle cx="233" cy="366" r="4.5" fill="#a93a35"/><circle cx="197" cy="195" r="4.5" fill="#4b4a92"/><circle cx="211" cy="275" r="3.9" fill="#a93a35"/><circle cx="206" cy="420" r="4.5" fill="#4b4a92"/><circle cx="201" cy="389" r="3.3" fill="#a93a35"/><circle cx="224" cy="315" r="3.9" fill="#a93a35"/><circle cx="210" cy="340" r="3.3" fill="#a93a35"/><circle cx="217" cy="379" r="4.5" fill="#4b4a92"/><circle cx="241" cy="379" r="3.3" fill="#a93a35"/><circle cx="252" cy="376" r="3.3" fill="#a93a35"/><circle cx="249" cy="353" r="3.9" fill="#4b4a92"/><circle cx="234" cy="414" r="3.3" fill="#a93a35"/><circle cx="203" cy="214" r="4.5" fill="#a93a35"/><circle cx="239" cy="388" r="4.5" fill="#a93a35"/><circle cx="205" cy="271" r="3.9" fill="#a93a35"/><circle cx="211" cy="374" r="3.9" fill="#a93a35"/><circle cx="216" cy="399" r="4.5" fill="#a93a35"/><circle cx="234" cy="283" r="3.3" fill="#a93a35"/><circle cx="237" cy="360" r="3.9" fill="#a93a35"/><circle cx="242" cy="380" r="4.5" fill="#a93a35"/><circle cx="231" cy="420" r="3.3" fill="#a93a35"/><circle cx="203" cy="195" r="4.5" fill="#4b4a92"/><circle cx="194" cy="343" r="3.3" fill="#a93a35"/><circle cx="229" cy="384" r="3.9" fill="#a93a35"/><circle cx="193" cy="240" r="4.5" fill="#a93a35"/><circle cx="225" cy="288" r="4.5" fill="#a93a35"/><circle cx="203" cy="273" r="3.9" fill="#4b4a92"/><circle cx="241" cy="384" r="3.3" fill="#4b4a92"/><circle cx="225" cy="315" r="3.3" fill="#a93a35"/><circle cx="230" cy="333" r="3.3" fill="#a93a35"/><circle cx="194" cy="231" r="3.9" fill="#a93a35"/><circle cx="236" cy="350" r="3.9" fill="#a93a35"/><circle cx="251" cy="374" r="3.9" fill="#a93a35"/><circle cx="229" cy="200" r="3.9" fill="#a93a35"/><circle cx="231" cy="322" r="4.5" fill="#a93a35"/><circle cx="204" cy="419" r="3.3" fill="#a93a35"/><circle cx="213" cy="353" r="3.3" fill="#a93a35"/><circle cx="238" cy="354" r="3.9" fill="#4b4a92"/><circle cx="246" cy="407" r="3.9" fill="#a93a35"/><circle cx="211" cy="219" r="3.3" fill="#a93a35"/><circle cx="222" cy="348" r="3.3" fill="#a93a35"/><circle cx="242" cy="401" r="4.5" fill="#a93a35"/><circle cx="223" cy="341" r="3.9" fill="#a93a35"/><circle cx="230" cy="242" r="3.9" fill="#4b4a92"/><circle cx="249" cy="398" r="4.5" fill="#a93a35"/><circle cx="246" cy="291" r="3.9" fill="#a93a35"/><circle cx="221" cy="289" r="3.9" fill="#a93a35"/><circle cx="234" cy="320" r="3.3" fill="#a93a35"/><circle cx="211" cy="280" r="3.3" fill="#4b4a92"/><circle cx="238" cy="421" r="3.3" fill="#4b4a92"/><circle cx="212" cy="210" r="3.3" fill="#a93a35"/><circle cx="270" cy="383" r="4.5" fill="#4b4a92"/><circle cx="235" cy="382" r="4.5" fill="#4b4a92"/><circle cx="236" cy="306" r="3.9" fill="#a93a35"/><circle cx="210" cy="204" r="3.3" fill="#a93a35"/><circle cx="215" cy="339" r="3.3" fill="#4b4a92"/><circle cx="232" cy="333" r="3.3" fill="#a93a35"/><circle cx="236" cy="270" r="3.9" fill="#a93a35"/><circle cx="255" cy="336" r="3.3" fill="#4b4a92"/><circle cx="228" cy="252" r="3.9" fill="#a93a35"/><circle cx="220" cy="338" r="4.5" fill="#a93a35"/><circle cx="217" cy="232" r="3.3" fill="#a93a35"/><circle cx="243" cy="424" r="3.3" fill="#a93a35"/><circle cx="229" cy="311" r="3.9" fill="#a93a35"/><circle cx="225" cy="215" r="3.9" fill="#a93a35"/><circle cx="224" cy="418" r="3.3" fill="#a93a35"/><circle cx="223" cy="421" r="4.5" fill="#a93a35"/><circle cx="244" cy="223" r="3.3" fill="#4b4a92"/><circle cx="258" cy="387" r="3.9" fill="#4b4a92"/><circle cx="221" cy="228" r="3.9" fill="#a93a35"/><circle cx="231" cy="395" r="3.9" fill="#a93a35"/><circle cx="205" cy="201" r="3.9" fill="#a93a35"/><circle cx="223" cy="295" r="4.5" fill="#4b4a92"/><circle cx="264" cy="266" r="3.9" fill="#a93a35"/><circle cx="226" cy="241" r="3.9" fill="#a93a35"/><circle cx="241" cy="308" r="4.5" fill="#a93a35"/><circle cx="259" cy="372" r="4.5" fill="#a93a35"/><circle cx="232" cy="200" r="3.9" fill="#a93a35"/><circle cx="265" cy="338" r="3.3" fill="#4b4a92"/><circle cx="252" cy="345" r="4.5" fill="#a93a35"/><circle cx="203" cy="282" r="4.5" fill="#a93a35"/><circle cx="272" cy="335" r="4.5" fill="#a93a35"/><circle cx="219" cy="400" r="3.3" fill="#4b4a92"/><circle cx="219" cy="404" r="4.5" fill="#a93a35"/><circle cx="246" cy="386" r="4.5" fill="#a93a35"/><circle cx="204" cy="350" r="3.3" fill="#a93a35"/><circle cx="239" cy="210" r="3.9" fill="#4b4a92"/><circle cx="242" cy="386" r="4.5" fill="#a93a35"/><circle cx="204" cy="194" r="3.9" fill="#a93a35"/><circle cx="233" cy="377" r="4.5" fill="#a93a35"/><circle cx="254" cy="401" r="3.9" fill="#a93a35"/><circle cx="232" cy="249" r="3.9" fill="#a93a35"/><circle cx="221" cy="245" r="3.9" fill="#a93a35"/><circle cx="216" cy="306" r="3.9" fill="#a93a35"/><circle cx="237" cy="404" r="3.3" fill="#a93a35"/><circle cx="222" cy="208" r="3.9" fill="#a93a35"/><circle cx="223" cy="343" r="3.9" fill="#a93a35"/><circle cx="196" cy="204" r="4.5" fill="#a93a35"/><circle cx="221" cy="213" r="3.9" fill="#a93a35"/><circle cx="245" cy="299" r="3.3" fill="#a93a35"/><circle cx="227" cy="423" r="3.9" fill="#a93a35"/><circle cx="211" cy="194" r="4.5" fill="#a93a35"/><circle cx="227" cy="418" r="3.3" fill="#a93a35"/><circle cx="221" cy="208" r="4.5" fill="#a93a35"/><circle cx="236" cy="313" r="4.5" fill="#4b4a92"/><circle cx="219" cy="256" r="3.9" fill="#a93a35"/><circle cx="236" cy="244" r="3.3" fill="#a93a35"/><circle cx="228" cy="413" r="3.9" fill="#a93a35"/><circle cx="232" cy="261" r="3.9" fill="#a93a35"/><circle cx="226" cy="190" r="3.9" fill="#a93a35"/><circle cx="286" cy="366" r="2.7" fill="#4b4a92"/><circle cx="458" cy="245" r="2.7" fill="#b8423c"/><circle cx="346" cy="380" r="2.7" fill="#b8423c"/><circle cx="339" cy="271" r="2.7" fill="#b8423c"/><circle cx="271" cy="209" r="2.7" fill="#4b4a92"/><circle cx="323" cy="368" r="2.7" fill="#b8423c"/><circle cx="318" cy="287" r="2.7" fill="#b8423c"/><circle cx="342" cy="372" r="2.7" fill="#4b4a92"/><circle cx="439" cy="310" r="2.7" fill="#4b4a92"/><circle cx="467" cy="294" r="2.7" fill="#4b4a92"/><circle cx="271" cy="329" r="2.7" fill="#b8423c"/><circle cx="426" cy="312" r="2.7" fill="#b8423c"/><circle cx="271" cy="366" r="2.7" fill="#b8423c"/><circle cx="364" cy="255" r="2.7" fill="#b8423c"/><circle cx="423" cy="375" r="2.7" fill="#b8423c"/><circle cx="404" cy="247" r="2.7" fill="#b8423c"/><circle cx="347" cy="222" r="2.7" fill="#b8423c"/><circle cx="306" cy="362" r="2.7" fill="#b8423c"/><circle cx="308" cy="362" r="2.7" fill="#4b4a92"/><circle cx="359" cy="217" r="2.7" fill="#b8423c"/><circle cx="280" cy="255" r="2.7" fill="#b8423c"/><circle cx="313" cy="239" r="2.7" fill="#b8423c"/><circle cx="455" cy="332" r="2.7" fill="#b8423c"/><circle cx="351" cy="290" r="2.7" fill="#b8423c"/><circle cx="334" cy="202" r="2.7" fill="#b8423c"/><circle cx="473" cy="214" r="2.7" fill="#b8423c"/><circle cx="399" cy="354" r="2.7" fill="#b8423c"/><circle cx="320" cy="237" r="2.7" fill="#b8423c"/><circle cx="358" cy="371" r="2.7" fill="#4b4a92"/><circle cx="452" cy="194" r="2.7" fill="#b8423c"/><circle cx="416" cy="360" r="2.7" fill="#b8423c"/><circle cx="389" cy="190" r="2.7" fill="#b8423c"/><circle cx="464" cy="347" r="2.7" fill="#4b4a92"/><circle cx="474" cy="237" r="2.7" fill="#b8423c"/><circle cx="294" cy="289" r="2.7" fill="#4b4a92"/><circle cx="467" cy="327" r="2.7" fill="#4b4a92"/><circle cx="428" cy="277" r="2.7" fill="#b8423c"/><circle cx="269" cy="339" r="2.7" fill="#b8423c"/><circle cx="462" cy="313" r="2.7" fill="#b8423c"/><circle cx="288" cy="238" r="2.7" fill="#4b4a92"/><circle cx="208" cy="83" r="2.7" fill="#4b4a92"/><circle cx="120" cy="133" r="2.7" fill="#4b4a92"/><circle cx="192" cy="117" r="2.7" fill="#4b4a92"/><circle cx="141" cy="142" r="2.7" fill="#4b4a92"/><circle cx="111" cy="106" r="2.7" fill="#4b4a92"/><circle cx="174" cy="185" r="2.7" fill="#4b4a92"/><circle cx="200" cy="176" r="2.7" fill="#4b4a92"/><circle cx="177" cy="98" r="2.7" fill="#4b4a92"/><circle cx="145" cy="185" r="2.7" fill="#4b4a92"/><circle cx="209" cy="107" r="2.7" fill="#4b4a92"/><circle cx="113" cy="130" r="2.7" fill="#4b4a92"/><circle cx="204" cy="120" r="2.7" fill="#4b4a92"/><circle cx="146" cy="150" r="2.7" fill="#4b4a92"/><circle cx="240" cy="97" r="2.7" fill="#4b4a92"/><circle cx="115" cy="111" r="2.7" fill="#4b4a92"/><circle cx="169" cy="152" r="2.7" fill="#4b4a92"/></g>
<g filter="url(#b2)" clip-path="url(#thc)"><ellipse cx="222" cy="250" rx="24" ry="60" fill="#8e302d" opacity=".8"/><ellipse cx="234" cy="368" rx="28" ry="52" fill="#8e302d" opacity=".85"/><ellipse cx="270" cy="400" rx="30" ry="26" fill="#8e302d" opacity=".45"/></g>
<!-- compass -->
<g stroke="#333" stroke-width="3"><path d="M480 412v86M437 455h86"/><path d="M462 437l36 36M498 437l-36 36" stroke-width="1.600"/></g><circle cx="480" cy="455" r="11" fill="#fff" stroke="#333" stroke-width="2.400"/><circle cx="480" cy="455" r="4" fill="#333"/>
<!-- inset -->
<path id="thi" d="M375 560L395 525 425 510 445 525 470 550 500 555 530 580 550 620 540 650 510 665 490 690 470 700 440 690 425 700 415 730 420 760 440 790 460 815 466 840 445 846 420 815 400 780 395 740 400 700 395 670 380 640 385 600z" fill="#fff" stroke="#111" stroke-width="5"/>
<g stroke="#111" stroke-width="3" fill="none"><path d="M395 540l30 10 20-20M425 512v40M450 530l-5 40M470 552l-5 30M500 557l-8 30M530 582l-30 20 10 40M548 620l-40 10M520 662l-10-30M400 700l25 5M397 740l22-5M402 780l24-10M422 815l20-18"/></g>
<path d="M400 570l40-12 6 36 44-6 6 42-26 30-30-10-20-10-24 16-16-20 20-26z" fill="#dc352b"/>
<text x="440" y="750" font-family="Liberation Sans,sans-serif" font-size="13" fill="#333" textLength="110" lengthAdjust="spacingAndGlyphs">Location of confirmed</text>
<text x="440" y="768" font-family="Liberation Sans,sans-serif" font-size="13" fill="#333" textLength="160" lengthAdjust="spacingAndGlyphs">human cases in Thailand</text>
<!-- legend -->
<circle cx="325" cy="45" r="4" fill="#4b4a92"/><circle cx="325" cy="75" r="4" fill="#dc352b"/>
<text x="340" y="40" font-family="Liberation Sans,sans-serif" font-size="14" fill="#333" textLength="245" lengthAdjust="spacingAndGlyphs">Location of reported avian influenza</text>
<text x="340" y="56" font-family="Liberation Sans,sans-serif" font-size="14" fill="#333" textLength="215" lengthAdjust="spacingAndGlyphs">outbreaks (January-May 2004)</text>
<text x="340" y="78" font-family="Liberation Sans,sans-serif" font-size="14" fill="#333" textLength="245" lengthAdjust="spacingAndGlyphs">Location of reported avian influenza</text>
<text x="340" y="94" font-family="Liberation Sans,sans-serif" font-size="14" fill="#333" textLength="235" lengthAdjust="spacingAndGlyphs">outbreaks (July-December 2004)</text>
</g>
</svg>
<div class="t" id="ncite" style="left:164px;top:173px;font-size:4.400px;font-weight:bold;color:#333;transform:scaleX(1.048)">(Tiensin et al., 2004)</div>

<!-- epidemic curves -->
<svg style="left:220px;top:40.300px" width="100" height="132" viewBox="0 0 100 132">
<text x="2" y="5.600" font-family="Liberation Sans,sans-serif" font-size="3.100" fill="#333" textLength="96" lengthAdjust="spacingAndGlyphs">Epidemic curve of the confirmed highly pathogenic avian</text>
<text x="2" y="10.200" font-family="Liberation Sans,sans-serif" font-size="3.100" fill="#333" textLength="96" lengthAdjust="spacingAndGlyphs">influenza H5N1 outbreaks in poultry in Thailand by date of</text>
<text x="2" y="14.800" font-family="Liberation Sans,sans-serif" font-size="3.100" fill="#333" textLength="96" lengthAdjust="spacingAndGlyphs">notifications. A) January–May 2004. B) July–December 2004</text>
<text x="3" y="24" font-family="Liberation Sans,sans-serif" font-size="3.600" font-weight="bold" fill="#222">A</text>
<text x="3" y="77" font-family="Liberation Sans,sans-serif" font-size="3.600" font-weight="bold" fill="#222">B</text>
<text x="29" y="25.600" font-family="Liberation Sans,sans-serif" font-size="1.700" fill="#333">Daily detections</text>
<text x="29" y="28" font-family="Liberation Sans,sans-serif" font-size="1.700" fill="#c33">Weekly average detections</text>
<text x="64" y="26.600" font-family="Liberation Sans,sans-serif" font-size="1.700" fill="#333">Onset of human case</text>
<text x="29" y="79" font-family="Liberation Sans,sans-serif" font-size="1.700" fill="#333">Daily detections</text>
<text x="29" y="81.400" font-family="Liberation Sans,sans-serif" font-size="1.700" fill="#c33">Weekly average detections</text>
<text x="64" y="79" font-family="Liberation Sans,sans-serif" font-size="1.700" fill="#333">Onset of human case</text>
<g stroke="#555" stroke-width=".35" fill="none"><path d="M12 22v38h78"/><path d="M12 76v42h80"/></g>
<g fill="#555"><rect x="20" y="40" width="1.200" height="20"/><rect x="21.500" y="27" width="1.400" height="33"/><rect x="23.200" y="46" width="1.200" height="14"/><rect x="25" y="54" width="1" height="6"/><rect x="27" y="57" width="1" height="3"/><rect x="33" y="57" width="1" height="3"/><rect x="44" y="58.400" width="1" height="1.600"/><rect x="65" y="58.400" width="1" height="1.600"/></g>
<path d="M12 59.500l6-1 2-14 1.500-2 2 12 3 4 8 1h55" stroke="#d9433a" stroke-width=".55" fill="none"/>
<g fill="#6a6a6a"><rect x="20" y="112" width="1" height="6"/><rect x="25" y="108" width="1.200" height="10"/><rect x="27" y="110" width="1" height="8"/><rect x="31" y="113" width="1" height="5"/><rect x="36" y="113" width="1" height="5"/><rect x="39" y="112" width="1" height="6"/><rect x="43" y="113" width="1" height="5"/><rect x="47" y="114" width="1" height="4"/><rect x="52" y="112" width="1" height="6"/><rect x="56" y="104" width="1.200" height="14"/><rect x="58" y="92" width="1.300" height="26"/><rect x="59.800" y="82" width="1.400" height="36"/><rect x="61.600" y="96" width="1.200" height="22"/><rect x="63.200" y="81" width="1.400" height="37"/><rect x="65" y="100" width="1.200" height="18"/><rect x="67" y="106" width="1" height="12"/><rect x="69" y="96" width="1.200" height="22"/><rect x="70.800" y="102" width="1" height="16"/><rect x="72.500" y="91" width="1.300" height="27"/><rect x="74.400" y="90" width="1.200" height="28"/><rect x="76.200" y="104" width="1" height="14"/><rect x="78" y="110" width="1" height="8"/><rect x="80" y="108" width="1" height="10"/><rect x="82" y="111" width="1" height="7"/><rect x="84" y="109" width="1" height="9"/><rect x="86" y="112" width="1" height="6"/><rect x="88.400" y="106" width="1.100" height="12"/><rect x="90.500" y="114" width="1" height="4"/></g>
<path d="M12 117l8-1 5-2 4 2 8 1 12-.5 5-3 3-10 4-8 3 2 3 10 4 1 3-4 3 2 3 7 6 2 6 2 5 .5" stroke="#d9433a" stroke-width=".6" fill="none"/>
<g fill="#222"><rect x="15" y="64" width="4.500" height="2"/><rect x="24" y="64" width="5" height="2"/><path d="M15 67h1v3.500h-1zM17 67h1v3.500h-1zM19 67h1v3.500h-1zM24 66.500h1.200v4h-1.200zM26 66.500h1.200v4h-1.200zM28 66.500h1.200v4h-1.200zM33 67h.8v3.500h-.8zM39.500 67h.8v3.500h-.8zM48 67h.8v3.500h-.8z"/>
<path d="M46 122h.9v4.500h-.9zM50 122h.9v4.500h-.9zM52 122h.9v4.500h-.9zM54 122h.9v4.500h-.9zM56 122h.9v4.500h-.9zM62 122h.9v4.500h-.9z"/></g>
</svg>
<div class="abs" style="left:285px;top:173.200px;width:35.400px;height:6.300px;border-radius:3.200px;background:#0b1f6b"></div>
<div class="t" id="ngam" style="left:290.500px;top:174.800px;font-size:3px;color:#fff">Made with <b>GAMMA</b></div>
</div>

<!-- ================= PRESENTER TOOLS (below slide) ================= -->
<div class="abs" style="left:510.500px;top:654px;width:33px;height:33px;border-radius:2px;background:#3e3d40"></div>
<svg style="left:259px;top:655px" width="30" height="30" viewBox="0 0 30 30"><path d="M25.800 3.600L11.200 18.800" stroke="#a8a8a8" stroke-width="5.600" stroke-linecap="round" fill="none"/><path d="M8 19.600l2.800 2.800-2 2.200-3.400-2.400z" fill="#a8a8a8"/><path d="M5.600 24l1.400 1.200-4 3.200c-.8.500-1.400-.2-1-.9z" fill="#a8a8a8"/></svg>
<svg style="left:309px;top:655px" width="30" height="30" viewBox="0 0 30 30"><rect x="1" y="1" width="10" height="10" fill="#a8a8a8"/><rect x="13.500" y="1" width="10" height="8" fill="#a8a8a8"/><rect x="1" y="13.500" width="8" height="9.500" fill="#a8a8a8"/><rect x="10.800" y="10.800" width="17" height="17" fill="#1c1b1e" stroke="#a8a8a8" stroke-width="2.600"/></svg>
<svg style="left:361px;top:656px" width="30" height="30" viewBox="0 0 30 30" fill="none" stroke="#a8a8a8"><circle cx="11.500" cy="11.500" r="8.500" stroke-width="2.800"/><path d="M17.800 17.800l8.600 8.600" stroke-width="4" stroke-linecap="round"/></svg>
<svg style="left:410px;top:655px" width="32" height="32" viewBox="0 0 32 32" fill="none" stroke="#a8a8a8"><path d="M1.500 20V2h27" stroke-width="1.500" stroke-dasharray="2.200 1.600"/><path d="M29 2L2 21.500" stroke-width="1.500"/><path d="M29 3v18.500H9" stroke-width="2.400"/><path d="M18 21.500v6M10.500 28.500h15" stroke-width="2.800"/></svg>
<svg style="left:461px;top:657px" width="30" height="27" viewBox="0 0 30 27" fill="none" stroke="#a8a8a8"><rect x="1" y="1" width="28" height="24" rx="1" stroke-width="1.600"/><path d="M4.500 18h21M4.500 21.400h6M12 21.400h6M19.500 21.400h6" stroke-width="1.300"/></svg>
<svg style="left:513px;top:659px" width="29" height="23" viewBox="0 0 29 23" fill="none" stroke="#e4e4e4"><rect x="1.400" y="1.800" width="17.500" height="18.500" rx="3" stroke-width="2.400"/><path d="M20.500 9l7-5.500v16l-7-5.500z" stroke-width="1.800" stroke-linejoin="round"/></svg>
<svg style="left:562px;top:655px" width="31" height="31" viewBox="0 0 31 31"><circle cx="15.500" cy="15.500" r="13.700" fill="none" stroke="#a8a8a8" stroke-width="1.600"/><circle cx="9.500" cy="15.500" r="1.700" fill="#a8a8a8"/><circle cx="15.500" cy="15.500" r="1.700" fill="#a8a8a8"/><circle cx="21.500" cy="15.500" r="1.700" fill="#a8a8a8"/></svg>
<!-- annotate pencil floating button -->
<div class="abs" style="left:18px;top:739px;width:32px;height:32px;border-radius:50%;background:#27282d"></div>
<svg style="left:26px;top:747px" width="16" height="17" viewBox="0 0 16 17" fill="none" stroke="#22e08f" stroke-width="1.300" stroke-linejoin="round"><path d="M1 10.700V13l4 .3 10-9.600L11.300 0z"/><path d="M9 2.700l3.300 3.600"/><path d="M1 15.700h14" stroke-width="1.400"/></svg>
<!-- ================= ZOOM TOOLBAR ================= -->
<div id="ztool" class="abs"></div>
<!-- Audio -->
<svg style="left:43px;top:800px" width="20" height="25" viewBox="0 0 20 25" fill="none" stroke="#fff" stroke-width="1.500" stroke-linecap="round"><rect x="5.700" y="1" width="7" height="13.500" rx="3.500"/><path d="M2 10.500v1.200a7.200 7.200 0 0 0 14.400 0v-1.200"/><path d="M9.200 19v4.500M5 23.600h8.400"/></svg>
<div class="abs" style="left:52px;top:800.500px;width:11.500px;height:11.500px;border-radius:50%;background:#f5145f"></div>
<div class="abs" style="left:57px;top:802.500px;width:1.600px;height:4.600px;background:#fff"></div><div class="abs" style="left:57px;top:808px;width:1.600px;height:1.600px;background:#fff"></div>
<svg style="left:80px;top:812px" width="9" height="6" viewBox="0 0 9 6"><path d="M1 5l3.500-3.600L8 5" fill="none" stroke="#fff" stroke-width="1.400"/></svg>
<div class="zl" id="z1" style="left:52px;transform:translateX(-50%) scaleX(0.945)">Audio</div>
<!-- Video -->
<svg style="left:131px;top:802px" width="28" height="26" viewBox="0 0 28 26" fill="none"><rect x="2.200" y="6.800" width="15" height="13" rx="2.600" stroke="#fff" stroke-width="1.500"/><path d="M19 12l6-4v11l-6-4z" stroke="#fff" stroke-width="1.400" stroke-linejoin="round"/><path d="M2.800 23.800L25.600 1.800" stroke="#000" stroke-width="4.500"/><path d="M2.800 23.800L25.600 1.800" stroke="#f5145f" stroke-width="2.200"/></svg>
<div class="zl" id="z2" style="left:144.500px;transform:translateX(-50%) scaleX(0.99)">Video</div>
<!-- Participants -->
<svg style="left:571px;top:806px" width="20" height="19" viewBox="0 0 20 19" fill="none" stroke="#fff" stroke-width="1.500"><circle cx="5.800" cy="4.200" r="2.900"/><circle cx="13.800" cy="7.200" r="2.300"/><path d="M1 17.200c-.6-4 1.600-6.600 5-6.600 1.600 0 2.800.4 3.600 1.200"/><rect x="8.600" y="12" width="10.400" height="5.600" rx="2.800"/><path d="M1 17.200h6"/></svg>
<div class="t" id="z3n" style="left:597px;top:807px;font-size:12px;color:#b9c3ca;transform:scaleX(.96)">100</div>
<svg style="left:630px;top:812px" width="9" height="6" viewBox="0 0 9 6"><path d="M1 5l3.500-3.600L8 5" fill="none" stroke="#fff" stroke-width="1.400"/></svg>
<div class="zl" id="z3" style="left:581.500px;transform:translateX(-50%) scaleX(0.932)">Participants</div>
<!-- Chat -->
<svg style="left:679px;top:803px" width="24" height="23" viewBox="0 0 24 23" fill="none" stroke="#fff" stroke-width="1.500" stroke-linejoin="round"><path d="M8 4.600V4c0-1.600 1.300-2.800 2.800-2.800h9.400C21.800 1.200 23 2.400 23 4v6.400c0 1.600-1.200 2.800-2.800 2.800h-.6"/><path d="M4 6.600h11c1.600 0 2.800 1.200 2.800 2.800v5.200c0 1.600-1.200 2.800-2.800 2.800H9.400L5.200 21.400v-4H4c-1.600 0-2.800-1.200-2.800-2.800V9.400C1.200 7.800 2.400 6.600 4 6.600z"/><circle cx="5.800" cy="12" r=".7" fill="#fff"/><circle cx="9.500" cy="12" r=".7" fill="#fff"/><circle cx="13.200" cy="12" r=".7" fill="#fff"/></svg>
<svg style="left:720px;top:812px" width="9" height="6" viewBox="0 0 9 6"><path d="M1 5l3.500-3.600L8 5" fill="none" stroke="#fff" stroke-width="1.400"/></svg>
<div class="zl" id="z4" style="left:691px;transform:translateX(-50%) scaleX(0.915)">Chat</div>
<!-- React -->
<svg style="left:763px;top:804px" width="26" height="23" viewBox="0 0 26 23" fill="none" stroke="#fff" stroke-width="1.500" stroke-linejoin="round"><path d="M12.200 5.200C9.800.6 2.400 1 1.600 6.400c-.6 4.600 4.800 9.600 7.600 14.200C13.600 17.800 24 14.400 24 8c0-5.200-7-7.400-11.800-2.800z"/></svg>
<div class="zl" id="z5" style="left:775.500px;transform:translateX(-50%) scaleX(0.929)">React</div>
<!-- Share -->
<div class="abs" style="left:853px;top:805.500px;width:24px;height:19px;border-radius:3px;background:#23e08d"></div>
<svg style="left:859px;top:809px" width="12" height="12" viewBox="0 0 12 12" fill="none" stroke="#000" stroke-width="2.200"><path d="M6 11.500V2.500M1.800 6.200L6 2l4.200 4.200"/></svg>
<div class="zl" id="z6" style="left:865.500px;transform:translateX(-50%) scaleX(0.922)">Share</div>
<!-- AI Companion -->
<svg style="left:948px;top:803px" width="24" height="24" viewBox="0 0 24 24"><defs><linearGradient id="aig" x1="0" y1="0" x2="1" y2="1"><stop offset="0" stop-color="#ffffff"/><stop offset=".5" stop-color="#cfe9f6"/><stop offset="1" stop-color="#8fc3dc"/></linearGradient></defs><path d="M11.500 1.200C13.200 7.400 16 10.300 22.300 12 16 13.700 13.200 16.600 11.500 22.800 9.800 16.600 7 13.700.7 12 7 10.300 9.800 7.400 11.500 1.200z" fill="url(#aig)"/><path d="M19.500.3c.6 2.200 1.500 3.100 3.700 3.700-2.200.6-3.100 1.500-3.700 3.700-.6-2.200-1.500-3.100-3.700-3.700 2.200-.6 3.100-1.500 3.700-3.700z" fill="#e9f5fb"/></svg>
<div class="zl" id="z7" style="left:960.500px;transform:translateX(-50%) scaleX(0.977)">AI Companion</div>
<!-- Meeting info -->
<svg style="left:1043px;top:803px" width="25" height="25" viewBox="0 0 25 25"><circle cx="12.500" cy="12.500" r="11.300" fill="none" stroke="#fff" stroke-width="1.500"/><circle cx="12.500" cy="7.200" r="1.300" fill="#fff"/><path d="M10.200 10.600h2.900v7M9.800 17.800h6" fill="none" stroke="#fff" stroke-width="1.600"/></svg>
<div class="zl" id="z8" style="left:1056px;transform:translateX(-50%) scaleX(0.993)">Meeting info</div>
<!-- More -->
<svg style="left:1134.500px;top:803px" width="25" height="25" viewBox="0 0 25 25"><circle cx="12.500" cy="12.500" r="11.300" fill="none" stroke="#fff" stroke-width="1.500"/><circle cx="7.300" cy="12.500" r="1.300" fill="#fff"/><circle cx="12.500" cy="12.500" r="1.300" fill="#fff"/><circle cx="17.700" cy="12.500" r="1.300" fill="#fff"/></svg>
<div class="zl" id="z9" style="left:1147px;transform:translateX(-50%) scaleX(1.03)">More</div>
<!-- Leave -->
<svg style="left:1539px;top:802px" width="27" height="26" viewBox="0 0 27 26" fill="none" stroke-linejoin="round" stroke-linecap="round"><path d="M11 1.200h13.500v20.600l-6.800 3V5.200l6.800-4" stroke="#f5145f" stroke-width="1.600"/><circle cx="9.800" cy="6.400" r="2.700" stroke="#fff" stroke-width="1.400" fill="#000"/><path d="M6.600 10.800l-3.800 3.400.8 3.600 2-.6-.2-2 1.800-1.200-.6 4.400-3.600 5 2.200 1.200 3.800-4.600 2.400 1.800.2 3.600 2.400-.2v-4.800l-2.400-2.800.8-3 1.600 1.600 2.400-1.400-3.200-4z" stroke="#fff" stroke-width="1.300" fill="#000"/></svg>
<div class="zl" id="z10" style="left:1552px;transform:translateX(-50%) scaleX(0.891)">Leave</div>
<!-- ================= WINDOWS TASKBAR ================= -->
<div id="wtask" class="abs"></div>
<!-- start -->
<svg style="left:435px;top:865px" width="23" height="23" viewBox="0 0 23 23"><defs><linearGradient id="wg" x1="0" y1="0" x2="1" y2="1"><stop offset="0" stop-color="#35b6f2"/><stop offset="1" stop-color="#0a7bd6"/></linearGradient></defs><rect x="0" y="0" width="11" height="11" rx=".6" fill="url(#wg)"/><rect x="12" y="0" width="11" height="11" rx=".6" fill="url(#wg)"/><rect x="0" y="12" width="11" height="11" rx=".6" fill="url(#wg)"/><rect x="12" y="12" width="11" height="11" rx=".6" fill="url(#wg)"/></svg>
<!-- search -->
<div class="abs" style="left:471.500px;top:861px;width:218.500px;height:30.500px;border-radius:15.500px;background:#fdf0f3;border:1px solid #e6ced5"></div>
<svg style="left:482px;top:869px" width="16" height="16" viewBox="0 0 16 16" fill="none" stroke="#222" stroke-width="1.700" stroke-linecap="round"><circle cx="6.600" cy="6.600" r="5.200"/><path d="M10.600 10.600l4.200 4.200"/></svg>
<div class="t" id="wsearch" style="left:508px;top:868.500px;font-size:14px;color:#5b5b5f;transform:scaleX(.925)">Search</div>
<svg style="left:640px;top:863px" width="44" height="26" viewBox="0 0 44 26">
<defs><clipPath id="sc"><path d="M2 24c-2-8 0-18 8-21 8-4 26-4 32 4 3 5 2 12 0 17z"/></clipPath></defs>
<g clip-path="url(#sc)"><rect width="44" height="26" fill="#cfe7f2"/><circle cx="28" cy="5" r="2.200" fill="#f7d774"/><ellipse cx="20" cy="8" rx="9" ry="3" fill="#fff" opacity=".8"/>
<rect x="0" y="5" width="8" height="21" fill="#e58a3c"/><rect x="8" y="3" width="6" height="23" fill="#f0a24a"/><rect x="11" y="0" width="3" height="5" fill="#d46a2a"/><rect x="14" y="8" width="5" height="18" fill="#3aa5a0"/><rect x="19" y="10" width="3" height="16" fill="#e9c05a"/>
<rect x="27" y="10" width="4" height="16" fill="#d45a3a"/><rect x="31" y="7" width="5" height="19" fill="#39a48f"/><rect x="36" y="4" width="8" height="22" fill="#ea8f3d"/>
<path d="M22 12c1-2 4-2 5 0v6h-5z" fill="#c97a5a"/><path d="M14 26l8-10h5l9 10z" fill="#9aa0ab"/><path d="M23.500 26l.8-9h.6l1 9z" fill="#e8e8ee"/>
<g fill="#7a3a1c" opacity=".7"><rect x="1.500" y="9" width="1.500" height="2"/><rect x="4.500" y="9" width="1.500" height="2"/><rect x="1.500" y="14" width="1.500" height="2"/><rect x="4.500" y="14" width="1.500" height="2"/><rect x="9.500" y="8" width="1.500" height="2"/><rect x="9.500" y="13" width="1.500" height="2"/><rect x="38" y="9" width="1.500" height="2"/><rect x="41" y="9" width="1.500" height="2"/><rect x="38" y="14" width="1.500" height="2"/><rect x="41" y="14" width="1.500" height="2"/><rect x="32.500" y="11" width="1.500" height="2"/><rect x="32.500" y="16" width="1.500" height="2"/></g></g></svg>
<!-- task view -->
<div class="abs" style="left:709.500px;top:865px;width:17.500px;height:15.500px;border-radius:2px;background:linear-gradient(135deg,#ffffff,#c9c6c8)"></div>
<div class="abs" style="left:702.500px;top:871.500px;width:18px;height:16px;border-radius:2px;background:linear-gradient(135deg,#3a3a3c,#101012)"></div>
<div class="abs" style="left:709.500px;top:871.500px;width:11px;height:9px;background:#a9a7a9"></div>
<!-- M365 copilot -->
<svg style="left:740px;top:858px" width="40" height="38" viewBox="0 0 492 467"><defs><linearGradient id="m1" x1="0" y1="0" x2="0" y2="1"><stop offset="0" stop-color="#2a8df2"/><stop offset=".45" stop-color="#31bfa0"/><stop offset=".75" stop-color="#8fcf4a"/><stop offset="1" stop-color="#f6d21e"/></linearGradient><linearGradient id="m2" x1="0" y1="0" x2="0" y2="1"><stop offset="0" stop-color="#a35cf5"/><stop offset=".5" stop-color="#e35bbd"/><stop offset="1" stop-color="#f5526e"/></linearGradient></defs>
<path d="M86 262C82 240 104 150 140 104c16-18 44-19 110-19l52 5c-34 6-52 32-62 72l-24 104c-4 14-14 20-34 20h-66c-18 0-26-8-30-24z" fill="url(#m1)"/>
<path d="M205 85h62c34 0 52 34 62 82l-32 0c-8-36-26-64-56-72z" fill="#1c4fdc"/>
<path d="M276 166l74-6c26 0 36 20 32 42l-22 68c-4 12-14 16-30 16h-92z" fill="url(#m2)"/>
<rect x="148" y="285" width="234" height="80" rx="8" fill="#0b0b0b"/>
<text x="265" y="352" text-anchor="middle" font-family="Liberation Sans,sans-serif" font-weight="bold" font-size="76" fill="#fff" textLength="210" lengthAdjust="spacingAndGlyphs">M365</text></svg>
<!-- explorer -->
<svg style="left:790px;top:865px" width="26" height="23" viewBox="0 0 26 23"><path d="M1 2.400C1 1.400 1.800.6 2.800.6h6l2.400 2.400H23c1 0 1.800.8 1.800 1.800V8H1z" fill="#e8a91c"/><rect x="1" y="5" width="24" height="17" rx="1.600" fill="#f9d254"/><rect x="1" y="5" width="24" height="17" rx="1.600" fill="url(#fg)"/><defs><linearGradient id="fg" x1="0" y1="0" x2="0" y2="1"><stop offset="0" stop-color="#fbdc6a"/><stop offset="1" stop-color="#f2bd2c"/></linearGradient></defs><path d="M7 22v-5.500c0-.8.600-1.500 1.500-1.500h9c.8 0 1.500.7 1.500 1.500V22z" fill="#2f8fe6"/><rect x="10" y="17.200" width="6" height="1.300" rx=".6" fill="#155fb4"/></svg>
<!-- edge -->
<svg style="left:740px;top:858px" width="130" height="38" viewBox="0 0 1599 467"><defs><linearGradient id="e1" x1="0" y1="1" x2="1" y2="0"><stop offset="0" stop-color="#1668c9"/><stop offset=".45" stop-color="#23a3dc"/><stop offset=".75" stop-color="#3fc8a8"/><stop offset="1" stop-color="#72dc4e"/></linearGradient></defs>
<circle cx="1315" cy="220" r="150" fill="url(#e1)"/>
<path d="M1172 196c-6 110 76 176 166 174 62-2 104-38 114-82-50 44-124 42-164 2-30-30-30-82 2-110-44-32-100-26-118 16z" fill="#0d55a3"/>
<path d="M1288 238a44 44 0 0 1 84-22c8 22-4 40 30 42 20 0 40-6 56-14 4 16 2 32-4 48-40 18-92 14-130-8-24-10-36-26-36-46z" fill="#f3d9e0"/>
</svg>
<!-- store -->
<svg style="left:879px;top:864px" width="24" height="25" viewBox="0 0 24 25"><defs><linearGradient id="st1" x1="0" y1="0" x2="0" y2="1"><stop offset="0" stop-color="#1b62b6"/><stop offset="1" stop-color="#173f82"/></linearGradient></defs><path d="M6 6.400V3.800c0-1.500 1.100-2.600 2.600-2.600h6.800c1.500 0 2.600 1.100 2.600 2.600v2.600" fill="none" stroke="#37c3f3" stroke-width="1.700"/><path d="M.8 5.800c0-.6.400-1 1-1h20.400c.6 0 1 .4 1 1v13.400c0 2.600-1.800 4.400-4.400 4.400H5.200C2.600 23.600.8 21.800.8 19.200z" fill="url(#st1)"/><rect x="7.400" y="9.800" width="4.200" height="4.200" fill="#f25022"/><rect x="12.400" y="9.800" width="4.200" height="4.200" fill="#7fba00"/><rect x="7.400" y="14.800" width="4.200" height="4.200" fill="#00a4ef"/><rect x="12.400" y="14.800" width="4.200" height="4.200" fill="#ffb900"/></svg>
<!-- outlook -->
<svg style="left:922px;top:864px" width="26" height="25" viewBox="0 0 26 25"><path d="M9 4.600L17.600.8l7.400 4.600v6H9z" fill="#1b6ec7"/><path d="M12 6l9.600-2.400 3.400 2.200V13H12z" fill="#2f9cf0"/><path d="M9 11.400l16-5.600V20c0 1.400-1 2.400-2.400 2.400H9z" fill="#28a8ea"/><path d="M9 22.400l16-9v6.800c0 1.200-1 2.200-2.200 2.200z" fill="#5fd0f7"/><path d="M9 11.400l13 11H9z" fill="#1788d8" opacity=".7"/><rect x=".6" y="5.600" width="13.400" height="13.400" rx="1.800" fill="#0f6cbd"/><ellipse cx="7.300" cy="12.300" rx="3.300" ry="3.800" fill="none" stroke="#fff" stroke-width="1.800"/></svg>
<!-- word -->
<svg style="left:966px;top:864px" width="23" height="24" viewBox="0 0 23 24"><defs><linearGradient id="wd1" x1="0" y1="0" x2="1" y2="0"><stop offset="0" stop-color="#3fd2fb"/><stop offset=".6" stop-color="#58c4fa"/><stop offset="1" stop-color="#a59cf6"/></linearGradient><linearGradient id="wd2" x1="0" y1="0" x2="1" y2="1"><stop offset="0" stop-color="#2f9af2"/><stop offset="1" stop-color="#2a6fe6"/></linearGradient><linearGradient id="wd3" x1="0" y1="0" x2="1" y2="1"><stop offset="0" stop-color="#1f63e6"/><stop offset="1" stop-color="#0f3fd2"/></linearGradient></defs>
<rect x="4" y=".6" width="18.400" height="22.600" rx="2.600" fill="url(#wd3)"/>
<path d="M4 3.200c0-1.500 1.100-2.600 2.600-2.600h13.200c1.500 0 2.600 1.100 2.600 2.600v12.200H4z" fill="url(#wd2)"/>
<path d="M4 3.200c0-1.500 1.100-2.600 2.600-2.600h13.200c1.500 0 2.600 1.100 2.600 2.600v4.600H4z" fill="url(#wd1)"/>
<rect x=".4" y="10.200" width="10.800" height="10.800" rx="2.200" fill="#1a3fb4"/><text x="5.800" y="18.800" text-anchor="middle" font-family="Liberation Sans,sans-serif" font-weight="bold" font-size="8" fill="#fff">W</text></svg>
<!-- excel -->
<svg style="left:1010.500px;top:864px" width="23" height="24" viewBox="0 0 23 24"><defs><linearGradient id="xl1" x1="0" y1="0" x2="1" y2="1"><stop offset="0" stop-color="#2e9a4c"/><stop offset="1" stop-color="#145c2c"/></linearGradient></defs>
<rect x="4" y=".6" width="18.400" height="22.600" rx="2.600" fill="url(#xl1)"/>
<path d="M4 3.200c0-1.500 1.100-2.600 2.600-2.600H13v8.400H4z" fill="#62c454"/>
<path d="M13 .6h6.800c1.500 0 2.600 1.100 2.600 2.600v4.600H13z" fill="#93e36c"/>
<path d="M13 7.800h9.400v3H13z" fill="#3eab52" opacity=".7"/>
<rect x=".4" y="10.200" width="10.800" height="10.800" rx="2.200" fill="#13682f"/><text x="5.800" y="18.800" text-anchor="middle" font-family="Liberation Sans,sans-serif" font-weight="bold" font-size="8" fill="#fff">X</text></svg>
<!-- LINE -->
<svg style="left:1055px;top:864px" width="24" height="24" viewBox="0 0 24 24"><rect width="24" height="24" rx="4.600" fill="#06c755"/><path d="M12 4.400c4.600 0 8.200 2.900 8.200 6.500 0 3.400-3.600 6.200-7 8.200-1 .6-1.200.2-1-.8.100-.6.100-1-.6-1.100C7.200 16.600 3.800 14 3.800 10.900 3.800 7.300 7.400 4.400 12 4.400z" fill="#fff"/><text x="12" y="12.700" text-anchor="middle" font-family="Liberation Sans,sans-serif" font-weight="bold" font-size="4.600" fill="#06c755">LINE</text></svg>
<!-- chrome -->
<svg style="left:1098.500px;top:864px" width="25" height="25" viewBox="0 0 25 25"><circle cx="12.500" cy="12.500" r="12" fill="#fbc116"/><path d="M12.500 12.500L2.100 6.500A12 12 0 0 1 22.900 6.500z" fill="#e33b2e"/><path d="M12.500.5a12 12 0 0 1 10.400 6H12.500z" fill="#e33b2e"/><path d="M2.100 6.500A12 12 0 0 0 11 24.400l5-8.600-3.500-3.300z" fill="#2da94f"/><path d="M2.100 6.500l5.600 9.300 4.800-3.300z" fill="#2da94f"/><circle cx="12.500" cy="12.500" r="5.600" fill="#fff"/><circle cx="12.500" cy="12.500" r="4.400" fill="#3f86f0"/></svg>
<!-- zoom (active) -->
<div class="abs" style="left:1135.500px;top:857.500px;width:38.500px;height:38px;border-radius:4px;background:#fbebef;border:1px solid #f7e2e8"></div>
<div class="abs" style="left:1143px;top:864px;width:24.500px;height:24.500px;border-radius:50%;background:radial-gradient(circle at 40% 30%,#2f7bff,#0b57e8)"></div>
<div class="t" id="wzm" style="left:1146.500px;top:868.500px;font-size:13px;font-weight:bold;color:#fff;letter-spacing:-.6px">zm</div>
<div class="abs" style="left:1147px;top:892px;width:16px;height:3px;border-radius:1.500px;background:#1a78d6"></div>
<!-- running indicators -->
<div class="abs" style="left:800px;top:892.500px;width:6px;height:2.500px;border-radius:1.200px;background:#8b8589"></div>
<div class="abs" style="left:844.500px;top:892.500px;width:6px;height:2.500px;border-radius:1.200px;background:#8b8589"></div>
<div class="abs" style="left:1064px;top:892.500px;width:6px;height:2.500px;border-radius:1.200px;background:#8b8589"></div>
<div class="abs" style="left:1108px;top:892.500px;width:6px;height:2.500px;border-radius:1.200px;background:#8b8589"></div>

<!-- system tray -->
<svg style="left:1324.500px;top:872.500px" width="12" height="7" viewBox="0 0 12 7"><path d="M1 6L6 1l5 5" fill="none" stroke="#222" stroke-width="1.300"/></svg>
<svg style="left:1353px;top:869px" width="19" height="17" viewBox="0 0 19 17"><defs><linearGradient id="cl" x1="0" y1="0" x2="0" y2="1"><stop offset="0" stop-color="#e6e6e6"/><stop offset="1" stop-color="#9a9a9a"/></linearGradient></defs><path d="M4.600 11.600C2.400 11.600 1 10 1 8.200 1 6.400 2.400 5 4.200 5 5 2.800 6.800 1.400 9 1.400c2.600 0 4.600 1.800 5 4.200 1.600.2 2.800 1.400 2.800 3s-1.200 3-3 3z" fill="url(#cl)" stroke="#555" stroke-width=".9"/><circle cx="12.600" cy="10.800" r="4.600" fill="#d3202f"/><path d="M10.900 9.100l3.400 3.400M14.300 9.100l-3.400 3.400" stroke="#fff" stroke-width="1.200"/></svg>
<svg style="left:1385px;top:867px" width="19" height="18" viewBox="0 0 19 18" fill="none" stroke="#222" stroke-width="1.200"><path d="M2 8.600A7 7 0 0 1 14.600 4.400"/><path d="M11.600 4.400h3.200V1.200"/><path d="M8.800 15.800A7 7 0 0 1 2.600 12"/><path d="M2.400 15.600V12.200h3.400"/><circle cx="12.800" cy="12.800" r="4.100" fill="#f59a0c" stroke="none"/></svg>
<div class="t wt" id="weng" style="left:1420.500px;top:871.500px;font-size:11.500px;transform:scaleX(.9)">ENG</div>
<svg style="left:1461.500px;top:867.500px" width="17" height="17" viewBox="0 0 17 17" fill="none" stroke="#222" stroke-width="1.100"><path d="M11.400 1H1v10.400h10.400"/><path d="M4 15.400h7M7 11.600v3.600"/><rect x="11.800" y=".8" width="3.400" height="4.800" rx="1"/><path d="M13.500 5.600v10.200"/></svg>
<svg style="left:1486px;top:869px" width="17" height="14" viewBox="0 0 17 14" fill="none" stroke="#222" stroke-width="1.100"><path d="M1 4.800h2.400L7 1.600v10.800L3.400 9.200H1z" stroke-linejoin="round"/><path d="M9 4.600c1 1.400 1 3.400 0 4.800M11.400 2.800c2 2.400 2 6 0 8.400M13.800 1.200c2.800 3.400 2.800 8.200 0 11.600"/></svg>
<div class="t wt" id="wtime" style="left:1537px;top:863px;font-size:11.500px;transform:scaleX(1.033)">9:36 AM</div>
<div class="t wt" id="wdate" style="left:1520px;top:878.500px;font-size:11.500px;transform:scaleX(1.048)">12/19/2025</div>
</body>
</html>
